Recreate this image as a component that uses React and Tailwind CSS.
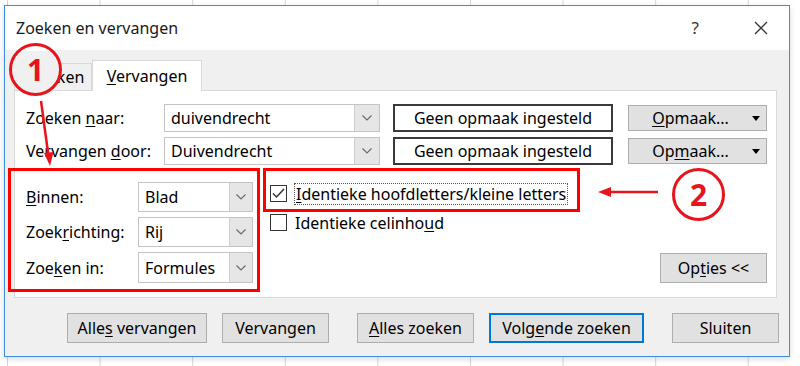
import React from 'react';

const Chevron = () => (
  <svg width="10" height="6" viewBox="0 0 10 6" className="text-[#6b6b6b]">
    <polyline points="0.5,0.5 5,5 9.5,0.5" fill="none" stroke="currentColor" strokeWidth="1.2" />
  </svg>
);

const Combo = ({ value, width, height = 'h-[28px]', btn = 'w-[25px]' }) => (
  <div className={`flex ${width} ${height} border border-[#c4c4c4] bg-white`}>
    <div className="flex-1 flex items-center pl-[6px] text-[16px] text-black">{value}</div>
    <div className={`${btn} flex items-center justify-center bg-[#e6e6e6] border-l border-[#cfcfcf]`}>
      <Chevron />
    </div>
  </div>
);

const Btn = ({ children, className = '' }) => (
  <div className={`h-[30px] flex items-center justify-center bg-[#e1e1e1] border border-[#adadad] text-[16px] text-black ${className}`}>
    {children}
  </div>
);

const Checkbox = ({ checked }) => (
  <div className="w-[17px] h-[17px] border border-[#333] bg-white flex items-center justify-center">
    {checked && (
      <svg width="13" height="11" viewBox="0 0 13 11">
        <polyline points="1,5.5 4.5,9 12,1" fill="none" stroke="#333" strokeWidth="1.5" />
      </svg>
    )}
  </div>
);

const App = () => {
  return (
    <div
      className="relative w-[800px] h-[366px] overflow-hidden bg-white pl-[4px] pt-[5px] bg-[linear-gradient(to_right,#d6d6d6_1px,transparent_1px)] bg-[size:92.6px_100%] bg-[position:7px_0]"
      style={{ fontFamily: '"Noto Sans", "Open Sans", sans-serif' }}
    >
      {/* Dialog */}
      <div className="w-[786px] h-[352px] flex flex-col border border-[#3d8ddb] bg-[#f0f0f0] shadow-[0_2px_6px_rgba(0,0,0,0.15)]">
        {/* Title bar */}
        <div className="h-[44px] bg-white flex items-center pl-[11px] pr-[21px] shrink-0">
          <span className="text-[16px] text-[#1a1a1a]">Zoeken en vervangen</span>
          <span className="ml-auto text-[17px] text-[#333] mr-[55px]">?</span>
          <svg width="14" height="14" viewBox="0 0 14 14">
            <path d="M1 1 L13 13 M13 1 L1 13" stroke="#333" strokeWidth="1.3" />
          </svg>
        </div>

        {/* Body */}
        <div className="flex-1 flex flex-col pl-[9px] pr-[12px] pt-[10px]">
          {/* Tabs */}
          <div className="flex items-end h-[30px]">
            <div className="w-[78px] h-[27px] border border-b-0 border-[#d9d9d9] bg-[#f0f0f0] flex items-center pl-[14px] text-[16px] text-black">
              Zoeken
            </div>
            <div className="w-[110px] h-[31px] border border-b-0 border-[#d9d9d9] bg-white -mb-px relative z-10 flex items-center justify-center text-[16px] text-black">
              <span><span className="underline underline-offset-2">V</span>ervangen</span>
            </div>
          </div>

          {/* Panel */}
          <div className="h-[208px] border border-[#d9d9d9] bg-white flex flex-col pl-[11px] pr-[9px] pt-[13px]">
            <div className="flex items-center h-[28px]">
              <div className="w-[138px] text-[16px] text-black">
                Zoeken <span className="underline underline-offset-2">n</span>aar:
              </div>
              <Combo value="duivendrecht" width="w-[216px]" />
              <div className="ml-[13px] w-[220px] h-[28px] border-2 border-[#3a3a3a] flex items-center justify-center text-[16px] text-black">
                Geen opmaak ingesteld
              </div>
              <Btn className="ml-[15px] w-[139px] !h-[26px] relative">
                <span className="mr-[14px]"><span className="underline underline-offset-2">O</span>pmaak...</span>
                <span className="absolute right-[6px] top-[10px] w-0 h-0 border-l-[4px] border-r-[4px] border-t-[5px] border-l-transparent border-r-transparent border-t-black"></span>
              </Btn>
            </div>
            <div className="flex items-center h-[28px] mt-[5px]">
              <div className="w-[138px] text-[16px] text-black">
                Vervangen <span className="underline underline-offset-2">d</span>oor:
              </div>
              <Combo value="Duivendrecht" width="w-[216px]" />
              <div className="ml-[13px] w-[220px] h-[28px] border-2 border-[#3a3a3a] flex items-center justify-center text-[16px] text-black">
                Geen opmaak ingesteld
              </div>
              <Btn className="ml-[15px] w-[139px] !h-[26px] relative">
                <span className="mr-[14px]">Op<span className="underline underline-offset-2">m</span>aak...</span>
                <span className="absolute right-[6px] top-[10px] w-0 h-0 border-l-[4px] border-r-[4px] border-t-[5px] border-l-transparent border-r-transparent border-t-black"></span>
              </Btn>
            </div>

            <div className="flex mt-[17px]">
              {/* Left options */}
              <div className="flex flex-col gap-[5px] w-[242px]">
                <div className="flex items-center">
                  <div className="w-[112px] text-[16px] text-black">
                    <span className="underline underline-offset-2">B</span>innen:
                  </div>
                  <Combo value="Blad" width="w-[115px]" height="h-[30px]" btn="w-[23px]" />
                </div>
                <div className="flex items-center">
                  <div className="w-[112px] text-[16px] text-black">
                    Zoek<span className="underline underline-offset-2">r</span>ichting:
                  </div>
                  <Combo value="Rij" width="w-[115px]" height="h-[30px]" btn="w-[23px]" />
                </div>
                <div className="flex items-center">
                  <div className="w-[112px] text-[16px] text-black">
                    Zoe<span className="underline underline-offset-2">k</span>en in:
                  </div>
                  <Combo value="Formules" width="w-[115px]" height="h-[31px]" btn="w-[23px]" />
                </div>
              </div>

              {/* Checkboxes */}
              <div className="flex flex-col pl-[2px]">
                <div className="flex items-center h-[23px]">
                  <Checkbox checked />
                  <span className="ml-[7px] px-[1px] border border-dotted border-[#555] text-[16px] text-black leading-[20px]">
                    <span className="underline underline-offset-2">I</span>dentieke hoofdletters/kleine letters
                  </span>
                </div>
                <div className="flex items-center h-[23px] mt-[6px]">
                  <Checkbox />
                  <span className="ml-[8px] text-[16px] text-black">
                    Identieke celinho<span className="underline underline-offset-2">u</span>d
                  </span>
                </div>
              </div>

              <div className="flex-1 flex items-end justify-end">
                <Btn className="w-[107px]">
                  Op<span className="underline underline-offset-2">t</span>ies &lt;&lt;
                </Btn>
              </div>
            </div>
          </div>

          {/* Bottom buttons */}
          <div className="flex justify-end -mr-[2px] mt-[15px]">
            <Btn className="w-[140px]">Alle<span className="underline underline-offset-2">s</span>&nbsp;vervangen</Btn>
            <Btn className="w-[107px] ml-[15px]">Vervan<span className="underline underline-offset-2">g</span>en</Btn>
            <Btn className="w-[117px] ml-[28px]"><span className="underline underline-offset-2">A</span>lles zoeken</Btn>
            <Btn className="w-[155px] ml-[15px] border-2 !border-[#0078d7]">Volg<span className="underline underline-offset-2">e</span>nde zoeken</Btn>
            <Btn className="w-[107px] ml-[28px]">Sluiten</Btn>
          </div>
        </div>
      </div>

      {/* Annotations */}
      <div className="absolute left-[8px] top-[168px] w-[252px] h-[124px] border-[3px] border-[#ff0000]"></div>
      <div className="absolute left-[263px] top-[168px] w-[317px] h-[44px] border-[3px] border-[#ff0000]"></div>

      <div className="absolute left-[9px] top-[43px] w-[53px] h-[53px] rounded-full border-[3px] border-[#e8141b] bg-[linear-gradient(to_bottom,#ffffff_5px,#f0f0f0_5px)] flex items-center justify-center">
        <span className="text-[30px] font-bold text-[#e8141b] leading-none">1</span>
      </div>
      <div className="absolute left-[672px] top-[168px] w-[53px] h-[53px] rounded-full border-[3px] border-[#e8141b] bg-white flex items-center justify-center">
        <span className="text-[30px] font-bold text-[#e8141b] leading-none">2</span>
      </div>

      <svg className="absolute left-0 top-0" width="800" height="366" viewBox="0 0 800 366">
        <line x1="41" y1="101" x2="48.5" y2="156" stroke="#e8141b" strokeWidth="2.5" />
        <polygon points="50,166 44,153 53.5,152" fill="#e8141b" />
        <line x1="658" y1="192" x2="608" y2="192" stroke="#e8141b" strokeWidth="2.5" />
        <polygon points="598,192 611,187 611,197" fill="#e8141b" />
      </svg>
    </div>
  );
};

export default App;
